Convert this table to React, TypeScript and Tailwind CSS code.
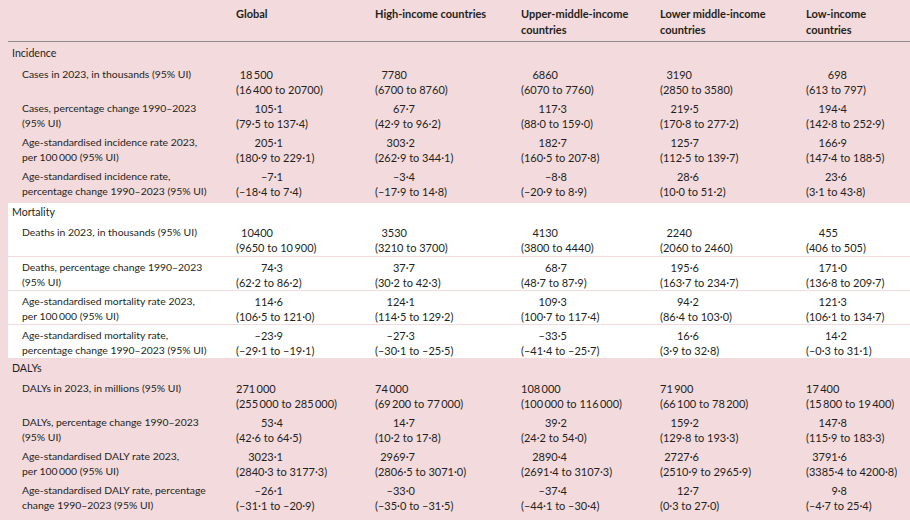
type Kind = "d" | "i" | "l";
type Cell = [string, string, Kind?];
type Row = { label: [string, string]; cells: Cell[] };
type Section = { title: string; white?: boolean; head: string; tail?: string; rows: Row[] };

// right edge for the point estimate inside each column (decimal / integer)
const cols = [
  { head: ["Global", ""], d: "w-[47px]", i: "w-[37px]" },
  { head: ["High-income countries", ""], d: "w-[40px]", i: "w-[32px]" },
  { head: ["Upper-middle-income", "countries"], d: "w-[46px]", i: "w-[37px]" },
  { head: ["Lower middle-income", "countries"], d: "w-[39px]", i: "w-[32px]" },
  { head: ["Low-income", "countries"], d: "w-[41px]", i: "w-[32px]" },
];

const grid = "grid grid-cols-[228px_139px_146px_139px_146px_1fr]";

const sections: Section[] = [
  {
    title: "Incidence",
    head: "h-[22px]",
    tail: "pb-[3px]",
    rows: [
      {
        label: ["Cases in 2023, in thousands (95% UI)", ""],
        cells: [
          ["18\u2009500", "(16\u2009400 to 20700)", "i"],
          ["7780", "(6700 to 8760)", "i"],
          ["6860", "(6070 to 7760)", "i"],
          ["3190", "(2850 to 3580)", "i"],
          ["698", "(613 to 797)"],
        ],
      },
      {
        label: ["Cases, percentage change 1990–2023", "(95% UI)"],
        cells: [
          ["105·1", "(79·5 to 137·4)"],
          ["67·7", "(42·9 to 96·2)"],
          ["117·3", "(88·0 to 159·0)"],
          ["219·5", "(170·8 to 277·2)"],
          ["194·4", "(142·8 to 252·9)"],
        ],
      },
      {
        label: ["Age-standardised incidence rate 2023,", "per 100\u2009000 (95% UI)"],
        cells: [
          ["205·1", "(180·9 to 229·1)"],
          ["303·2", "(262·9 to 344·1)"],
          ["182·7", "(160·5 to 207·8)"],
          ["125·7", "(112·5 to 139·7)"],
          ["166·9", "(147·4 to 188·5)"],
        ],
      },
      {
        label: ["Age-standardised incidence rate,", "percentage change 1990–2023 (95% UI)"],
        cells: [
          ["–7·1", "(–18·4 to 7·4)"],
          ["–3·4", "(–17·9 to 14·8)"],
          ["–8·8", "(–20·9 to 8·9)"],
          ["28·6", "(10·0 to 51·2)"],
          ["23·6", "(3·1 to 43·8)"],
        ],
      },
    ],
  },
  {
    title: "Mortality",
    white: true,
    head: "h-[19px]",
    rows: [
      {
        label: ["Deaths in 2023, in thousands (95% UI)", ""],
        cells: [
          ["10400", "(9650 to 10\u2009900)", "i"],
          ["3530", "(3210 to 3700)", "i"],
          ["4130", "(3800 to 4440)", "i"],
          ["2240", "(2060 to 2460)", "i"],
          ["455", "(406 to 505)", "i"],
        ],
      },
      {
        label: ["Deaths, percentage change 1990–2023", "(95% UI)"],
        cells: [
          ["74·3", "(62·2 to 86·2)"],
          ["37·7", "(30·2 to 42·3)"],
          ["68·7", "(48·7 to 87·9)"],
          ["195·6", "(163·7 to 234·7)"],
          ["171·0", "(136·8 to 209·7)"],
        ],
      },
      {
        label: ["Age-standardised mortality rate 2023,", "per 100\u2009000 (95% UI)"],
        cells: [
          ["114·6", "(106·5 to 121·0)"],
          ["124·1", "(114·5 to 129·2)"],
          ["109·3", "(100·7 to 117·4)"],
          ["94·2", "(86·4 to 103·0)"],
          ["121·3", "(106·1 to 134·7)"],
        ],
      },
      {
        label: ["Age-standardised mortality rate,", "percentage change 1990–2023 (95% UI)"],
        cells: [
          ["–23·9", "(–29·1 to –19·1)"],
          ["–27·3", "(–30·1 to –25·5)"],
          ["–33·5", "(–41·4 to –25·7)"],
          ["16·6", "(3·9 to 32·8)"],
          ["14·2", "(–0·3 to 31·1)"],
        ],
      },
    ],
  },
  {
    title: "DALYs",
    head: "h-[20px]",
    rows: [
      {
        label: ["DALYs in 2023, in millions (95% UI)", ""],
        cells: [
          ["271\u2009000", "(255\u2009000 to 285\u2009000)", "l"],
          ["74\u2009000", "(69\u2009200 to 77\u2009000)", "l"],
          ["108\u2009000", "(100\u2009000 to 116\u2009000)", "l"],
          ["71\u2009900", "(66\u2009100 to 78\u2009200)", "l"],
          ["17\u2009400", "(15\u2009800 to 19\u2009400)", "l"],
        ],
      },
      {
        label: ["DALYs, percentage change 1990–2023", "(95% UI)"],
        cells: [
          ["53·4", "(42·6 to 64·5)"],
          ["14·7", "(10·2 to 17·8)"],
          ["39·2", "(24·2 to 54·0)"],
          ["159·2", "(129·8 to 193·3)"],
          ["147·8", "(115·9 to 183·3)"],
        ],
      },
      {
        label: ["Age-standardised DALY rate 2023,", "per 100\u2009000 (95% UI)"],
        cells: [
          ["3023·1", "(2840·3 to 3177·3)"],
          ["2969·7", "(2806·5 to 3071·0)"],
          ["2890·4", "(2691·4 to 3107·3)"],
          ["2727·6", "(2510·9 to 2965·9)"],
          ["3791·6", "(3385·4 to 4200·8)"],
        ],
      },
      {
        label: ["Age-standardised DALY rate, percentage", "change 1990–2023 (95% UI)"],
        cells: [
          ["–26·1", "(–31·1 to –20·9)"],
          ["–33·0", "(–35·0 to –31·5)"],
          ["–37·4", "(–44·1 to –30·4)"],
          ["12·7", "(0·3 to 27·0)"],
          ["9·8", "(–4·7 to 25·4)"],
        ],
      },
    ],
  },
];

function Point({ value, kind, col }: { value: string; kind: Kind; col: number }) {
  if (kind === "l") return <div>{value}</div>;
  const w = kind === "i" ? cols[col].i : cols[col].d;
  return <div className={`${w} whitespace-nowrap text-right`}>{value}</div>;
}

export default function App() {
  return (
    <div
      className="w-[910px] h-[520px] overflow-hidden bg-[#f3dadc] pl-2 text-[11px] leading-[15px] text-[#231f20]"
      style={{ fontFamily: "Lato, 'Liberation Sans', sans-serif" }}
    >
      {/* column heads */}
      <div className={`${grid} h-[42px] border-b border-[#8e8a8b] pt-[6px] font-bold leading-[16px]`}>
        <div />
        {cols.map((c) => (
          <div key={c.head[0]} className="whitespace-nowrap">
            <div>{c.head[0]}</div>
            {c.head[1] && <div>{c.head[1]}</div>}
          </div>
        ))}
      </div>

      {sections.map((s) => (
        <div key={s.title} className={`${s.white ? "bg-white" : ""} ${s.tail ?? ""}`}>
          <div className={`${s.head} flex items-center pl-1 text-[10.6px]`}>{s.title}</div>
          {s.rows.map((r, ri) => (
            <div
              key={r.label[0]}
              className={`${grid} h-[34px] pt-[3px] ${s.white && ri > 0 ? "border-t border-[#f3dadc] pt-[2px]" : ""}`}
            >
              <div className="pl-[14px] whitespace-nowrap text-[10.4px]">
                <div>{r.label[0]}</div>
                {r.label[1] && <div>{r.label[1]}</div>}
              </div>
              {r.cells.map((c, ci) => (
                <div key={ci} className="whitespace-nowrap">
                  <Point value={c[0]} kind={c[2] ?? "d"} col={ci} />
                  <div>{c[1]}</div>
                </div>
              ))}
            </div>
          ))}
        </div>
      ))}
    </div>
  );
}
